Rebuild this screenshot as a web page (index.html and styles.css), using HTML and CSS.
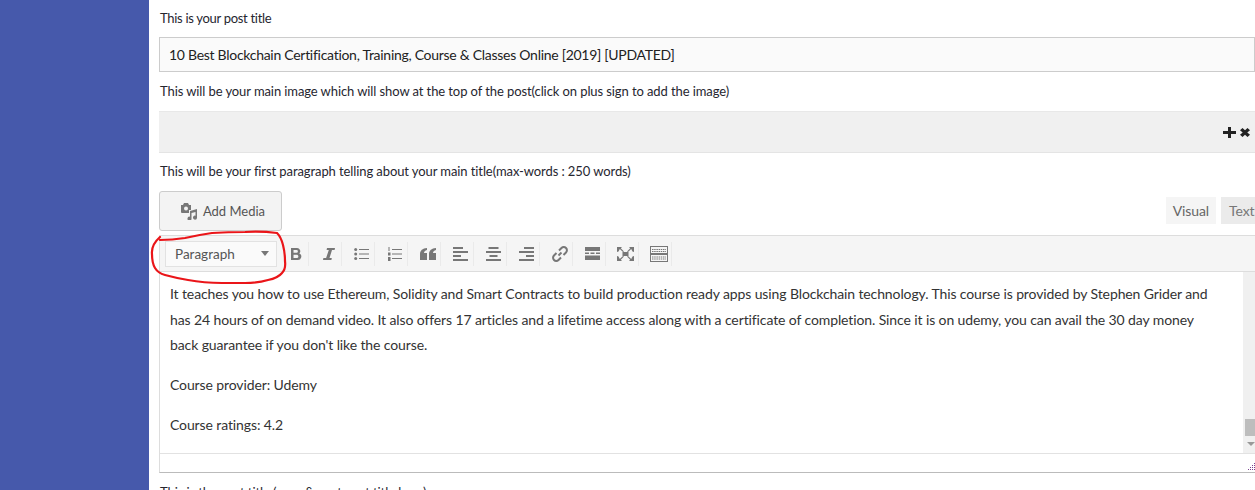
FILE: index.html
```html
<!DOCTYPE html>
<html lang="en">
<head>
<meta charset="utf-8">
<title>Post editor</title>
<link rel="stylesheet" href="styles.css">
</head>
<body>
<div class="app">
  <aside class="sidebar"></aside>
  <main class="main">
    <p class="label first">This is your post title</p>
    <div class="title-input">10 Best Blockchain Certification, Training, Course &amp; Classes Online [2019] [UPDATED]</div>
    <p class="label second">This will be your main image which will show at the top of the post(click on plus sign to add the image)</p>
    <div class="image-bar">
      <svg class="bar-icon" width="13" height="11" viewBox="0 0 13 11"><path d="M5 0h3v4h5v3H8v4H5V7H0V4h5z" fill="#222"/></svg>
      <svg class="bar-icon" width="10" height="9" viewBox="0 0 10 9"><path d="M2.500 0 5 2.300 7.500 0 10 2.300 7.300 4.500 10 6.700 7.500 9 5 6.700 2.500 9 0 6.700 2.700 4.500 0 2.300z" fill="#222"/></svg>
    </div>
    <p class="label third">This will be your first paragraph telling about your main title(max-words : 250 words)</p>
    <div class="editor-top">
      <button class="media-btn">
        <svg width="18" height="17" viewBox="0 0 18 17"><path d="M1 2h2l1-2h4l1 2h2v5H9v3H2a1 1 0 0 1-1-1z" fill="#777"/><circle cx="6" cy="5.500" r="2" fill="#f3f3f3"/><path d="M10 8l7-2v8.500a2 2 0 1 1-1.500-1.800V9l-4 1v5.500a2 2 0 1 1-1.500-1.800z" fill="#777"/></svg>
        <span>Add Media</span>
      </button>
      <div class="tabs"><span class="tab">Visual</span><span class="tab active">Text</span></div>
    </div>
    <div class="editor">
      <div class="toolbar">
        <div class="format-select"><span>Paragraph</span><i class="caret"></i></div>
        <span class="tool"><svg width="12" height="14" viewBox="0 0 12 14"><path d="M1 1h6a3.200 3.200 0 0 1 2.400 5.400A3.500 3.500 0 0 1 7.500 13H1zM3.500 3v2.800H6.500a1.400 1.400 0 0 0 0-2.800zm0 4.800V11h3.300a1.600 1.600 0 0 0 0-3.200z" fill="#777" fill-rule="evenodd"/></svg></span>
        <span class="tool"><svg width="14" height="14" viewBox="0 0 14 14"><path d="M5 1h8l-.4 2H10L7.500 11h2.300l-.4 2H1l.4-2h2.700L6.800 3H4.600z" fill="#777"/></svg></span>
        <span class="tool"><svg width="15" height="14" viewBox="0 0 15 14"><g fill="#777"><circle cx="1.700" cy="2.500" r="1.500"/><circle cx="1.700" cy="7" r="1.500"/><circle cx="1.700" cy="11.500" r="1.500"/><rect x="5" y="2" width="10" height="1"/><rect x="5" y="6.500" width="10" height="1"/><rect x="5" y="11" width="10" height="1"/></g></svg></span>
        <span class="tool"><svg width="15" height="14" viewBox="0 0 15 14"><g fill="#777"><rect x="1.500" y="0" width="1" height="4"/><rect x="1" y="5.500" width="2.500" height="3"/><rect x="1" y="10" width="2.500" height="4"/><rect x="5" y="2" width="10" height="1"/><rect x="5" y="6.500" width="10" height="1"/><rect x="5" y="11" width="10" height="1"/></g></svg></span>
        <span class="tool"><svg width="16" height="12" viewBox="0 0 16 12"><path d="M7 0v2C5 2.500 4 3.500 4 5h3v7H0V6C0 2.500 2.500.4 7 0zm9 0v2c-2 .5-3 1.500-3 3h3v7H9V6c0-3.500 2.500-5.600 7-6z" fill="#777"/></svg></span>
        <span class="tool"><svg width="15" height="14" viewBox="0 0 15 14"><g fill="#777"><rect y="0" width="10" height="2"/><rect y="4" width="15" height="2"/><rect y="8" width="8" height="2"/><rect y="12" width="15" height="2"/></g></svg></span>
        <span class="tool"><svg width="15" height="14" viewBox="0 0 15 14"><g fill="#777"><rect x="2.500" y="0" width="10" height="2"/><rect y="4" width="15" height="2"/><rect x="3.500" y="8" width="8" height="2"/><rect y="12" width="15" height="2"/></g></svg></span>
        <span class="tool"><svg width="15" height="14" viewBox="0 0 15 14"><g fill="#777"><rect x="5" y="0" width="10" height="2"/><rect y="4" width="15" height="2"/><rect x="7" y="8" width="8" height="2"/><rect y="12" width="15" height="2"/></g></svg></span>
        <span class="tool"><svg width="18" height="18" viewBox="0 0 18 18"><g fill="none" stroke="#777" stroke-width="2"><path d="M7.500 10.500 10.500 7.500"/><path d="M8 5.500l2.500-2.500a3 3 0 0 1 4.500 4.500L12.500 10"/><path d="M10 12.500 7.500 15a3 3 0 0 1-4.500-4.500L5.500 8"/></g></svg></span>
        <span class="tool"><svg width="15" height="13" viewBox="0 0 15 13"><g fill="#777"><rect width="15" height="4"/><rect y="5.500" width="4" height="1.500"/><rect x="5.500" y="5.500" width="4" height="1.500"/><rect x="11" y="5.500" width="4" height="1.500"/><rect y="8.500" width="15" height="4.500"/></g></svg></span>
        <span class="tool"><svg width="17" height="14" viewBox="0 0 17 14"><g fill="#777"><rect x="5.500" y="5" width="6" height="4"/><path d="M0 0h5L3.800 1.200 7 4.500 6 5 2.800 2 1.500 4.500 0 5zM17 0h-5l1.200 1.200L10 4.500l1 .5 3.200-3 1.300 2.500L17 5zM0 14h5l-1.200-1.200L7 9.500 6 9l-3.200 3-1.300-2.500L0 9zM17 14h-5l1.200-1.200L10 9.500l1-.5 3.200 3 1.300-2.500L17 9z"/></g></svg></span>
        <span class="tool"><svg width="18" height="16" viewBox="0 0 18 16"><g fill="none" stroke="#777"><rect x=".5" y=".5" width="17" height="15"/><path d="M1 7.500h16M1 8.500h16"/></g><path d="M2 3.500h14M2 5.500h14M2 11h14M2 13h14" stroke="#777" stroke-dasharray="1.500 .7"/></svg></span>
      </div>
      <div class="content-wrap">
        <div class="content">
          <p class="para">It teaches you how to use Ethereum, Solidity and Smart Contracts to build production ready apps using Blockchain technology. This course is provided by Stephen Grider and has 24 hours of on demand video. It also offers 17 articles and a lifetime access along with a certificate of completion. Since it is on udemy, you can avail the 30 day money back guarantee if you don't like the course.</p>
          <p class="para">Course provider: Udemy</p>
          <p class="para">Course ratings: 4.2</p>
        </div>
        <div class="scrollbar"><i class="thumb"></i><i class="arrow"></i></div>
      </div>
      <div class="statusbar"><svg class="grip" width="7" height="7" viewBox="0 0 7 7"><g fill="#7a3f8f"><rect x="6" y="0" width="1" height="1"/><rect x="4" y="2" width="1" height="1"/><rect x="6" y="2" width="1" height="1"/><rect x="2" y="4" width="1" height="1"/><rect x="4" y="4" width="1" height="1"/><rect x="6" y="4" width="1" height="1"/><rect x="0" y="6" width="1" height="1"/><rect x="2" y="6" width="1" height="1"/><rect x="4" y="6" width="1" height="1"/><rect x="6" y="6" width="1" height="1"/></g></svg></div>
    </div>
    <p class="label fourth">This is the post title (your &amp; next post title here)</p>
  </main>
</div>
<svg class="annotation" width="142" height="60" viewBox="0 0 142 60"><path d="M12 9Q3 17 4 26Q4 35 7 40Q10 45 17 47Q28 50 40 52Q56 55 74 55L97 55Q110 55 120 52Q130 50 134 45Q138 41 137 33Q137 25 135 17Q133 9 129 5Q113 3 97 4Q80 4 64 5Q50 7 37 10Q24 12 12 12" fill="none" stroke="#ea1519" stroke-width="2.200" stroke-linecap="round"/></svg>
</body>
</html>
```

FILE: styles.css
```css
html, body { margin: 0; padding: 0; height: 490px; overflow: hidden; background: #fff; }
body { font-family: "Lato", "Open Sans", sans-serif; color: #222; position: relative; }
.app { display: flex; width: 1255px; height: 490px; overflow: hidden; }
.sidebar { width: 149px; flex: none; background: #4659ab; }
.main { width: 1096px; flex: none; margin-left: 10px; }
.label { margin: 0; padding-left: 1px; font-size: 13px; line-height: 18px; color: #26262f; letter-spacing: -0.09px; }
.first { padding-top: 9px; letter-spacing: -0.3px; }
.second { margin-top: 10px; }
.third { margin-top: 9px; }
.fourth { margin-top: 10px; }
.title-input { margin-top: 10px; height: 33px; border: 1px solid #ccc; background: #fafafa; padding-left: 9px; font-size: 14px; line-height: 33px; color: #222; letter-spacing: -0.28px; }
.image-bar { margin-top: 11px; height: 42px; box-sizing: border-box; background: #f0f0f0; border-top: 1px solid #e8e8e8; border-bottom: 1px solid #e4e4e4; display: flex; align-items: center; justify-content: flex-end; gap: 4px; padding-right: 5px; }
.editor-top { display: flex; justify-content: space-between; align-items: flex-end; margin-top: 11px; height: 40px; }
.media-btn { width: 123px; height: 40px; border: 1px solid #ccc; border-radius: 3px; background: #f3f3f3; display: flex; align-items: center; justify-content: center; gap: 5px; padding: 0 0 0 4px; font: 13px "Lato", sans-serif; color: #555; }
.tabs { display: flex; gap: 5px; margin-bottom: 7px; }
.tab { height: 27px; line-height: 27px; padding: 0 7px; font-size: 14px; color: #666; background: #f5f5f5; letter-spacing: -0.1px; box-sizing: border-box; }
.tab.active { background: #ebebeb; color: #777; padding: 0 0 0 8px; width: 34px; }
.editor { box-sizing: border-box; margin-top: 4px; border-top: 1px solid #ddd; border-bottom: 1px solid #bbb; border-left: 1px solid #ddd; }
.toolbar { display: flex; align-items: center; height: 36px; box-sizing: border-box; background: #f5f5f5; border-bottom: 1px solid #ddd; padding-left: 5px; }
.format-select { width: 112px; height: 26px; box-sizing: border-box; flex: none; border: 1px solid #e2e2e2; background: #fafafa; display: flex; align-items: center; justify-content: space-between; padding: 0 7px 0 9px; font-size: 13.500px; color: #555; margin-right: -1px; }
.caret { width: 0; height: 0; border-left: 4px solid transparent; border-right: 4px solid transparent; border-top: 5px solid #777; }
.tool { width: 33px; height: 24px; display: flex; align-items: center; justify-content: center; flex: none; border-right: 1px solid #eaeaea; box-sizing: border-box; padding-left: 7px; }
.content-wrap { display: flex; height: 181px; }
.content { flex: 1; padding: 9px 20px 0 10px; overflow: hidden; }
.para { margin: 0 0 14.300px; font-size: 14px; line-height: 25.700px; color: #333; letter-spacing: -0.11px; }
.scrollbar { width: 12px; background: #f0f0f0; position: relative; flex: none; }
.thumb { position: absolute; left: 2px; right: 0; top: 147px; height: 17px; background: #bdbdbd; }
.arrow { position: absolute; left: 4px; top: 170px; width: 0; height: 0; border-left: 4px solid transparent; border-right: 4px solid transparent; border-top: 4px solid #999; }
.statusbar { height: 19px; box-sizing: border-box; border-top: 1px solid #e2e2e2; display: flex; justify-content: flex-end; align-items: flex-end; padding: 0 0 2px; }
.annotation { position: absolute; left: 148px; top: 228px; }
```
